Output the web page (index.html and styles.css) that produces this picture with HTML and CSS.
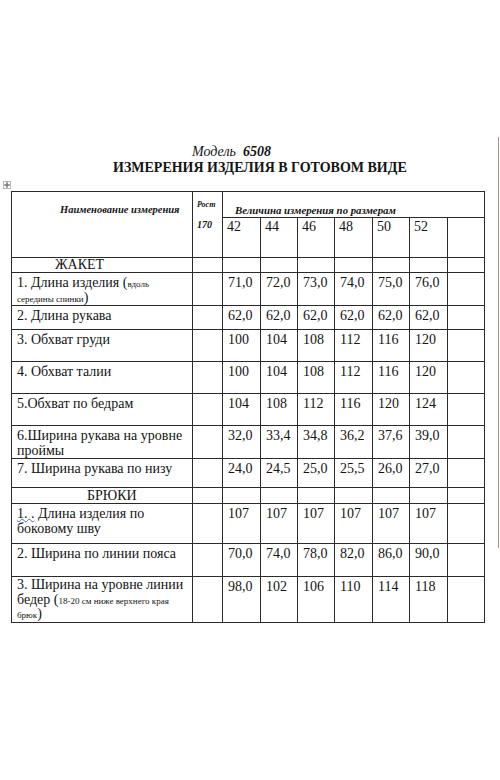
FILE: index.html
```html
<!DOCTYPE html>
<html lang="ru">
<head>
<meta charset="utf-8">
<title>Модель 6508</title>
<link rel="stylesheet" href="styles.css">
</head>
<body>
<div class="page">
  <div class="sheet">
    <div class="model"><i>Модель</i>&nbsp; <b><i>6508</i></b></div>
    <div class="title">ИЗМЕРЕНИЯ ИЗДЕЛИЯ В ГОТОВОМ ВИДЕ</div>
    <div class="handle-row">
      <span class="handle"><svg width="8" height="8" viewBox="0 0 8 8"><rect x="0.5" y="0.5" width="7" height="7" fill="#fff" stroke="#b8b8b8"/><path d="M4 1.5v5M1.5 4h5" stroke="#555" stroke-width="1"/><path d="M4 1.2l-1 1h2zM4 6.8l-1-1h2zM1.2 4l1-1v2zM6.8 4l-1-1v2z" fill="#555"/></svg></span>
    </div>
    <table class="sizes">
      <colgroup>
        <col class="c-name"><col class="c-h"><col class="c-38"><col class="c-37"><col class="c-37"><col class="c-38"><col class="c-37"><col class="c-38"><col class="c-37">
      </colgroup>
      <tr class="h1">
        <td rowspan="2" class="hname">Наименование измерения</td>
        <td rowspan="2" class="hrost"><div class="rost">Рост</div><div class="r170">170</div></td>
        <td colspan="7" class="hval">Величина измерения по размерам</td>
      </tr>
      <tr class="h2">
        <td class="sz">42</td><td class="sz">44</td><td class="sz">46</td><td class="sz">48</td><td class="sz">50</td><td class="sz">52</td><td></td>
      </tr>
      <tr class="sec">
        <td class="sec-j">ЖАКЕТ</td><td></td><td></td><td></td><td></td><td></td><td></td><td></td><td></td>
      </tr>
      <tr class="r32">
        <td class="nm">1. Длина изделия (<span class="sm">вдоль</span><br><span class="sm">середины спинки</span>)</td><td></td>
        <td class="v">71,0</td><td class="v">72,0</td><td class="v">73,0</td><td class="v">74,0</td><td class="v">75,0</td><td class="v">76,0</td><td></td>
      </tr>
      <tr class="r24">
        <td class="nm">2. Длина рукава</td><td></td>
        <td class="v">62,0</td><td class="v">62,0</td><td class="v">62,0</td><td class="v">62,0</td><td class="v">62,0</td><td class="v">62,0</td><td></td>
      </tr>
      <tr class="r32">
        <td class="nm">3. Обхват груди</td><td></td>
        <td class="v">100</td><td class="v">104</td><td class="v">108</td><td class="v">112</td><td class="v">116</td><td class="v">120</td><td></td>
      </tr>
      <tr class="r32b">
        <td class="nm">4. Обхват талии</td><td></td>
        <td class="v">100</td><td class="v">104</td><td class="v">108</td><td class="v">112</td><td class="v">116</td><td class="v">120</td><td></td>
      </tr>
      <tr class="r32">
        <td class="nm">5.Обхват по бедрам</td><td></td>
        <td class="v">104</td><td class="v">108</td><td class="v">112</td><td class="v">116</td><td class="v">120</td><td class="v">124</td><td></td>
      </tr>
      <tr class="r32b">
        <td class="nm">6.Ширина рукава на уровне проймы</td><td></td>
        <td class="v">32,0</td><td class="v">33,4</td><td class="v">34,8</td><td class="v">36,2</td><td class="v">37,6</td><td class="v">39,0</td><td></td>
      </tr>
      <tr class="r29">
        <td class="nm">7. Ширина рукава по низу</td><td></td>
        <td class="v">24,0</td><td class="v">24,5</td><td class="v">25,0</td><td class="v">25,5</td><td class="v">26,0</td><td class="v">27,0</td><td></td>
      </tr>
      <tr class="sec2">
        <td class="sec-b">БРЮКИ</td><td></td><td></td><td></td><td></td><td></td><td></td><td></td><td></td>
      </tr>
      <tr class="r40">
        <td class="nm"><span class="spell">1. .</span> Длина изделия по боковому шву</td><td></td>
        <td class="v">107</td><td class="v">107</td><td class="v">107</td><td class="v">107</td><td class="v">107</td><td class="v">107</td><td></td>
      </tr>
      <tr class="r33">
        <td class="nm">2. Ширина по линии пояса</td><td></td>
        <td class="v">70,0</td><td class="v">74,0</td><td class="v">78,0</td><td class="v">82,0</td><td class="v">86,0</td><td class="v">90,0</td><td></td>
      </tr>
      <tr class="r46">
        <td class="nm nm3">3. Ширина на уровне линии бедер (<span class="sm">18-20 см ниже верхнего края</span><br><span class="sm">брюк</span>)</td><td></td>
        <td class="v">98,0</td><td class="v">102</td><td class="v">106</td><td class="v">110</td><td class="v">114</td><td class="v">118</td><td></td>
      </tr>
    </table>
  </div>
  <div class="edge"></div>
</div>
</body>
</html>
```

FILE: styles.css
```css
html, body {
  margin: 0;
  padding: 0;
  background: #ffffff;
}
body {
  font-family: "Liberation Serif", "Times New Roman", serif;
  color: #141414;
}
.page {
  display: flex;
  width: 500px;
}
.sheet {
  width: 498px;
  padding-top: 144px;
}
.edge {
  width: 1px;
  margin-top: 137px;
  height: 411px;
  background: #a39491;
}
.model {
  font-size: 14px;
  line-height: 16px;
  padding-left: 192px;
}
.title {
  font-size: 14px;
  font-weight: bold;
  line-height: 16px;
  padding-left: 113px;
  white-space: nowrap;
}
.handle-row {
  height: 15px;
  display: flex;
  align-items: flex-end;
  padding-left: 3px;
}
.handle {
  display: block;
  width: 8px;
  height: 8px;
  margin-bottom: 2px;
}
.handle svg {
  display: block;
}
.sizes {
  margin-left: 11px;
  border-collapse: collapse;
  table-layout: fixed;
  width: 473px;
  font-size: 14px;
}
.sizes td {
  border: 1px solid #2a2a2a;
  padding: 0;
  vertical-align: top;
  overflow: hidden;
}
.c-name { width: 181px; }
.c-h { width: 30px; }
.c-38 { width: 38px; }
.c-37 { width: 37px; }

.h1 { height: 26px; }
.h2 { height: 40px; }
.hname {
  font-weight: bold;
  font-style: italic;
  font-size: 10.5px;
  padding: 12px 0 0 48px !important;
  white-space: nowrap;
}
.hrost {
  font-weight: bold;
  font-style: italic;
  padding: 8px 0 0 4px !important;
}
.rost {
  font-size: 8px;
  line-height: 10px;
}
.r170 {
  font-size: 10px;
  line-height: 12px;
  margin-top: 9px;
}
.hval {
  font-weight: bold;
  font-style: italic;
  font-size: 10.8px;
  vertical-align: bottom !important;
  padding: 0 0 1px 12px !important;
  white-space: nowrap;
}
.sz {
  font-size: 14px;
  line-height: 16px;
  padding: 1px 0 0 4px !important;
}
.sec { height: 15px; }
.sec2 { height: 16px; }
.sec-j, .sec-b {
  line-height: 14px;
  font-size: 14px;
}
.sec-j { padding-left: 43px !important; }
.sec-b { padding: 1px 0 0 75px !important; }

.r24 { height: 24px; }
.r29 { height: 29px; }
.r32 { height: 32px; }
.r32b { height: 32px; }
.r33 { height: 33px; }
.r40 { height: 40px; }
.r46 { height: 46px; }

.nm {
  line-height: 15px;
  padding: 2px 4px 0 5px !important;
}
.nm3 {
  line-height: 14.5px;
  padding-top: 1px !important;
}
.sm {
  font-size: 9px;
  line-height: 0;
}
.v {
  line-height: 15px;
  padding: 2px 0 0 5px !important;
  white-space: nowrap;
}
.spell {
  text-decoration: underline wavy #4a63c8;
  text-decoration-thickness: 1px;
  text-underline-offset: 0;
}
```
